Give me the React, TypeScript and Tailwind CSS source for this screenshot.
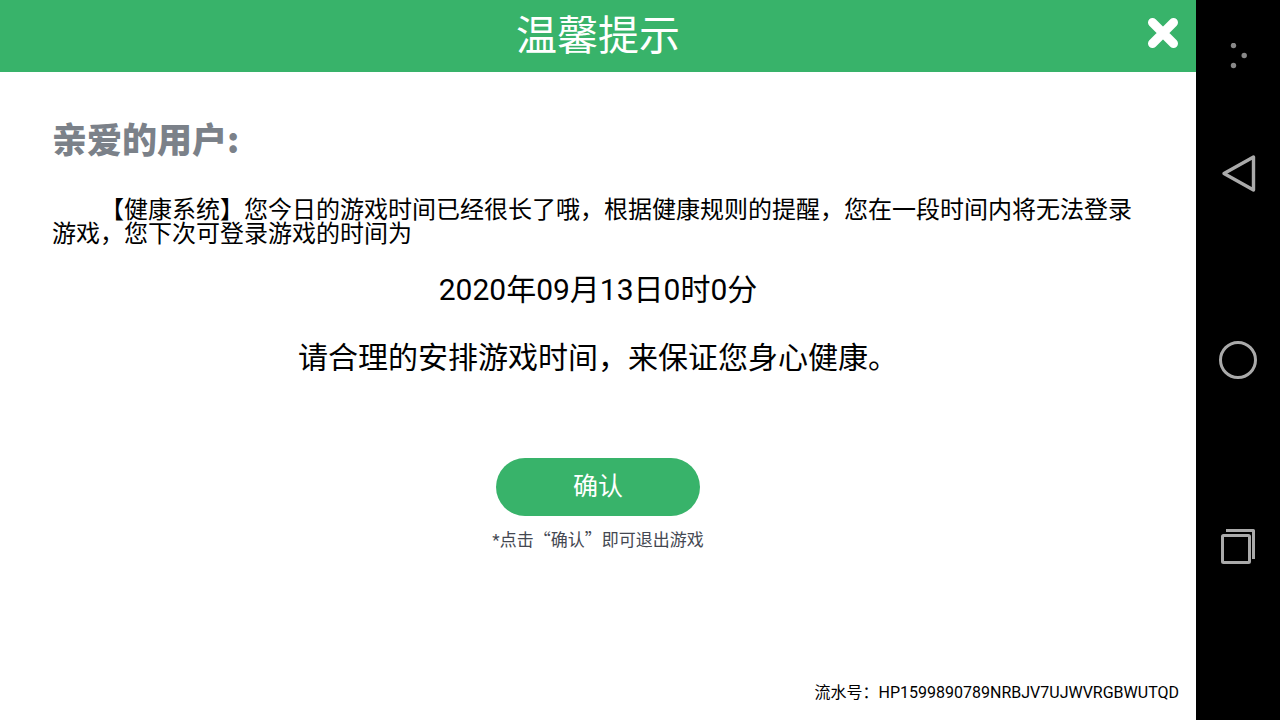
/**
 * Health system reminder
 * Full screen notice with the device navigation bar on the right
 */

// full width punctuation is escaped so editors do not normalise it
const GREETING = '亲爱的用户:';
const NOTICE =
  '【健康系统】您今日的游戏时间已经很长了哦\uFF0C根据健康规则的提醒\uFF0C您在一段时间内将无法登录游戏\uFF0C您下次可登录游戏的时间为';
const LOGIN_TIME = '2020年09月13日0时0分';
const ADVICE = '请合理的安排游戏时间\uFF0C来保证您身心健康。';
const SERIAL_LABEL = '流水号\uFF1A';
const SERIAL = 'HP1599890789NRBJV7UJWVRGBWUTQD';

function CloseIcon() {
  return (
    <svg width="32" height="32" viewBox="0 0 32 32" stroke="#fff" strokeWidth="9" strokeLinecap="round">
      <path d="M5.5 5.5 26.5 26.5M26.5 5.5 5.5 26.5" />
    </svg>
  );
}

function DotsIcon() {
  return (
    <svg width="18" height="26" viewBox="-1 0 18 26" fill="#888" aria-hidden="true">
      <circle cx="3.5" cy="2.5" r="2.7" />
      <circle cx="14.2" cy="12.5" r="2.7" />
      <circle cx="3.5" cy="22.5" r="2.7" />
    </svg>
  );
}

function BackIcon() {
  return (
    <svg width="40" height="40" viewBox="0 0 40 40" fill="none" stroke="#aaa" strokeWidth="3.4" strokeLinejoin="round">
      <path d="M6 19.5 35.5 3V36Z" />
    </svg>
  );
}

function HomeIcon() {
  return (
    <svg width="40" height="40" viewBox="0 0 40 40" fill="none" stroke="#aaa" strokeWidth="3">
      <circle cx="20" cy="19" r="17.5" />
    </svg>
  );
}

function RecentsIcon() {
  return (
    <svg width="40" height="40" viewBox="0 0 40 40" fill="none" stroke="#aaa" strokeWidth="3" strokeLinejoin="round">
      <rect x="4.5" y="7.5" width="27" height="27" rx="1" />
      <path d="M8 2.5H35.5V31" />
    </svg>
  );
}

const NAV_ITEMS = [
  { label: '返回', icon: BackIcon },
  { label: '主屏幕', icon: HomeIcon },
  { label: '最近任务', icon: RecentsIcon },
];

export default function App() {
  return (
    <div lang="zh-CN" className="flex min-h-screen bg-white font-[Roboto,'Noto_Sans_CJK_SC',sans-serif] text-black">
      <div className="flex min-w-0 flex-1 flex-col">
        <header className="relative flex h-[72px] items-center justify-center bg-[#38b36a]">
          <h1 className="text-[41px] leading-[72px] text-white">温馨提示</h1>
          <button type="button" aria-label="关闭" className="absolute top-[17px] right-[17px]">
            <CloseIcon />
          </button>
        </header>

        <main className="flex flex-1 flex-col px-[52px] pt-[46px]">
          <h2 className="font-['Noto_Sans_CJK_SC',sans-serif] text-[35px] leading-[40px] font-black text-[#7b8189]">
            {GREETING}
          </h2>
          <p className="mt-10 indent-[48px] text-2xl leading-6">{NOTICE}</p>
          <p className="mt-6 text-center text-[30px] leading-[40px]">{LOGIN_TIME}</p>
          <p className="mt-7 text-center text-[30px] leading-[40px]">{ADVICE}</p>

          <div className="mt-20 flex flex-col items-center">
            <button type="button" className="h-[58px] w-[204px] rounded-full bg-[#38b36a] text-[25px] text-white">
              确认
            </button>
            <p className="mt-[11px] font-['Noto_Sans_CJK_SC',sans-serif] text-[17px] leading-6 text-[#444852]">
              <span className="font-[Roboto,sans-serif]">*</span>点击“确认”即可退出游戏
            </p>
          </div>
        </main>

        <footer className="px-[17px] pb-4 text-right text-base leading-6">
          {SERIAL_LABEL}
          {SERIAL}
        </footer>
      </div>

      <nav aria-label="系统导航" className="flex w-[84px] shrink-0 flex-col items-center justify-center bg-black">
        <div className="flex h-20 items-end pb-[11px]">
          <DotsIcon />
        </div>
        {NAV_ITEMS.map(({ label, icon: Icon }) => (
          <button key={label} type="button" aria-label={label} className="flex h-[187px] w-full items-center justify-center">
            <Icon />
          </button>
        ))}
        <div className="h-20" />
      </nav>
    </div>
  );
}
